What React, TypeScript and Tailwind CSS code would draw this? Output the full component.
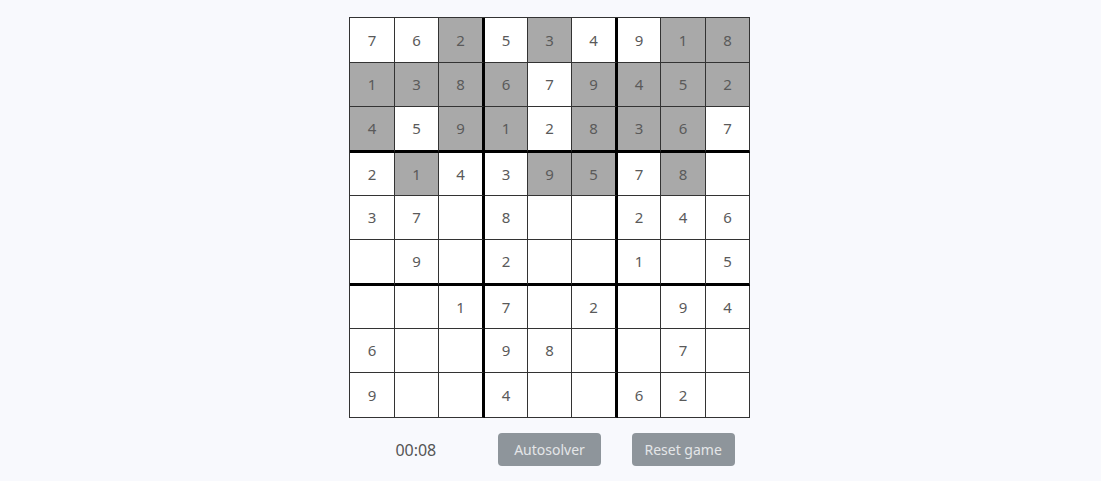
const board: { v: string; g: boolean }[][] = [
  "7 6 2* 5 3* 4 9 1* 8*",
  "1* 3* 8* 6* 7 9* 4* 5* 2*",
  "4* 5 9* 1* 2 8* 3* 6* 7",
  "2 1* 4 3 9* 5* 7 8* _",
  "3 7 _ 8 _ _ 2 4 6",
  "_ 9 _ 2 _ _ 1 _ 5",
  "_ _ 1 7 _ 2 _ 9 4",
  "6 _ _ 9 8 _ _ 7 _",
  "9 _ _ 4 _ _ 6 2 _",
].map((row) =>
  row.split(" ").map((c) => ({
    v: c === "_" ? "" : c.replace("*", ""),
    g: c.endsWith("*"),
  }))
);

function Cell({ v, g, r, c }: { v: string; g: boolean; r: number; c: number }) {
  const right = c === 2 || c === 5 ? "border-r-[3px] border-r-black" : "border-r border-r-[#333]";
  const bottom = r === 2 || r === 5 ? "border-b-[3px] border-b-black" : "border-b border-b-[#333]";
  return (
    <div
      className={`flex items-center justify-center text-[15px] text-[#5a5a5a] ${right} ${bottom} ${
        g ? "bg-[#a9a9a9]" : "bg-white"
      }`}
    >
      {v}
    </div>
  );
}

export default function App() {
  return (
    <div
      className="min-h-[481px] w-full bg-[#f8f9fd] flex flex-col items-center pt-[17px] pr-[2px]"
      style={{ fontFamily: '"Noto Sans", "Open Sans", sans-serif' }}
    >
      <div className="grid grid-cols-[45px_44px_46px_43px_44px_46px_43px_45px_44px] grid-rows-[45px_44px_46px_43px_44px_46px_43px_44px_45px] w-[401px] h-[401px] border-l border-t border-[#333]">
        {board.map((row, r) =>
          row.map((cell, c) => <Cell key={`${r}-${c}`} v={cell.v} g={cell.g} r={r} c={c} />)
        )}
      </div>

      {/* controls */}
      <div className="grid grid-cols-3 w-[401px] mt-[15px] items-center">
        <div className="flex justify-center text-[16px] text-[#555]">00:08</div>
        <div className="flex justify-center">
          <button className="w-[103px] h-[33px] rounded-[4px] bg-[#8e959b] text-[#e4e6e8] text-[14px]">
            Autosolver
          </button>
        </div>
        <div className="flex justify-center">
          <button className="w-[103px] h-[33px] rounded-[4px] bg-[#8e959b] text-[#e4e6e8] text-[14px]">
            Reset game
          </button>
        </div>
      </div>
    </div>
  );
}
